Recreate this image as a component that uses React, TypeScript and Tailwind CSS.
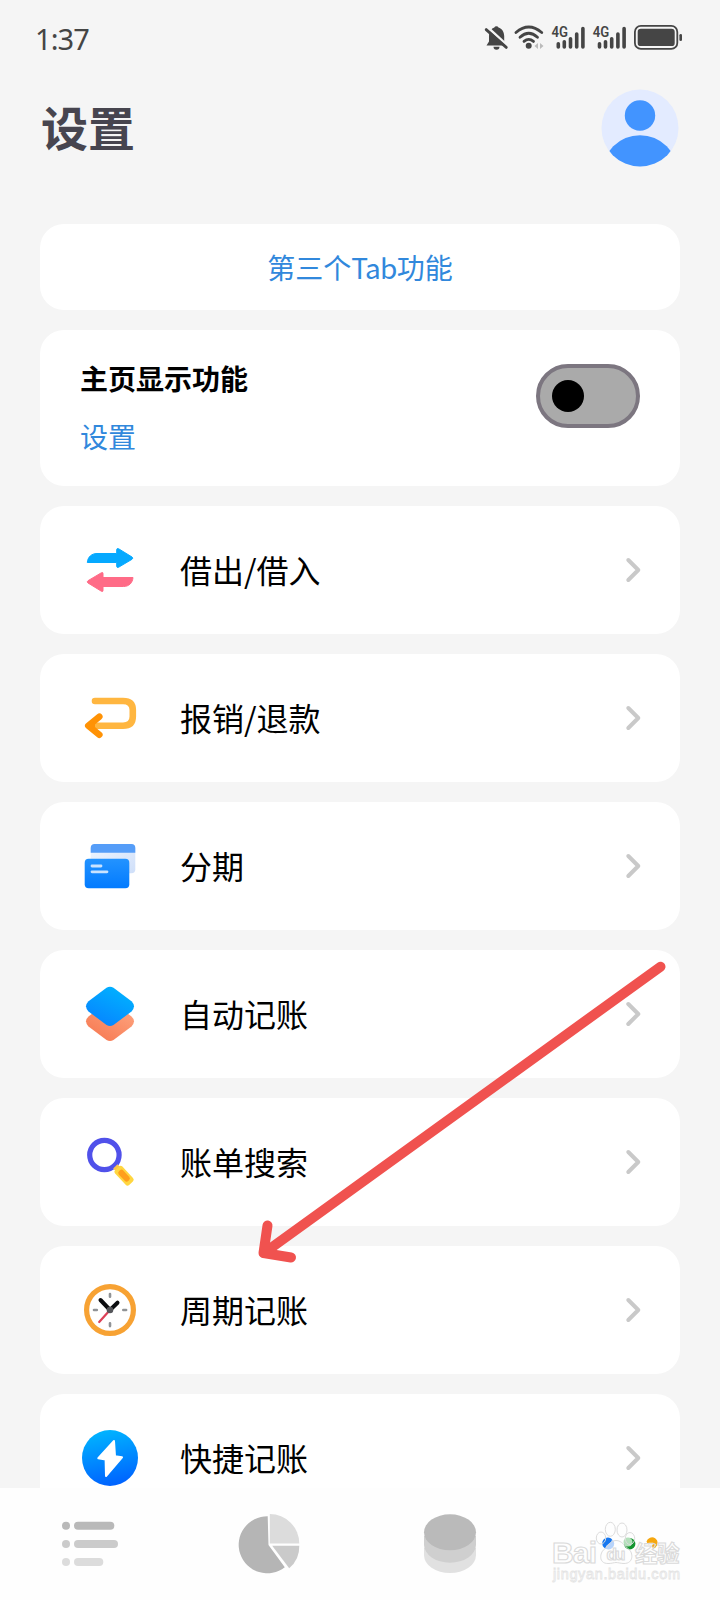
import type { ReactNode } from "react";

const ink = "#454545";

function StatusIcons() {
  return (
    <svg width="200" height="30" viewBox="0 0 200 30" fill="none">
      <g fill={ink}>
        <path d="M4.500 22.500 7 18.500V13.500C7 8.500 9.500 5.500 12.300 4.600a2.300 2.300 0 0 1 4.200 0C20 5.500 22 9 22.200 13v5.500l2.500 4Z" />
        <path d="M11.500 23.800h6a3 3 0 0 1-6 0Z" />
      </g>
      <path d="M5.500 4.300 27 24" stroke="#f5f5f5" strokeWidth="2.600" />
      <path d="M4.200 6.600 24.300 24.400" stroke={ink} strokeWidth="2.800" strokeLinecap="round" />
      <g stroke={ink} strokeWidth="2.800" strokeLinecap="round">
        <path d="M34 9.500Q46.700-1.500 59.700 9.500" />
        <path d="M38 14.300Q46.700 6.300 55.500 14.300" />
        <path d="M42 18.400Q46.700 14.300 51.500 18.400" />
      </g>
      <circle cx="46.700" cy="22.800" r="3" fill={ink} />
      <path d="m56 20-3.500 3 3.500 3Zm2 0 3.500 3-3.500 3Z" fill="#bbb" />
      {[0, 41.2].map((dx) => (
        <g key={dx} transform={`translate(${dx} 0)`}>
          <text x="69.500" y="14" fontSize="14.500" fontWeight="600" fill={ink} textLength="16.500" lengthAdjust="spacingAndGlyphs" className="font-['Roboto',sans-serif]">4G</text>
          <g stroke={ink} strokeWidth="3.600" strokeLinecap="round">
            <path d="M76.300 20.800V24M82.300 18.800V24M88.500 15.800V24M94.700 11V24M100.900 5.600V24" />
          </g>
        </g>
      ))}
      <rect x="152.900" y="2.900" width="42.400" height="23" rx="6" stroke={ink} strokeWidth="1.800" />
      <rect x="155.700" y="5.700" width="37" height="17.400" rx="3.200" fill={ink} />
      <rect x="197.400" y="11" width="2.600" height="7" rx="1.300" fill={ink} />
    </svg>
  );
}

function Avatar() {
  return (
    <svg width="78" height="78" viewBox="0 0 78 78">
      <defs>
        <clipPath id="avatar"><circle cx="39" cy="39" r="38.500" /></clipPath>
      </defs>
      <circle cx="39" cy="39" r="38.500" fill="#e3ebff" />
      <g clipPath="url(#avatar)" fill="#4294ff">
        <circle cx="39" cy="26.500" r="15.200" />
        <circle cx="39" cy="84" r="37.800" />
      </g>
    </svg>
  );
}

function Icon({ children }: { children: ReactNode }) {
  return (
    <svg width="60" height="60" viewBox="0 0 60 60" fill="none" className="shrink-0">
      {children}
    </svg>
  );
}

const LendIcon = (
  <Icon>
    <path d="M7.300 22.500C7.800 17 11.500 13.500 17 13.500H36.700V9.500Q37 8 38.500 8.700L52 17Q53.500 18.200 52 19.300L38.500 27.300Q37 28 36.700 26.500V22.500Z" fill="#05a9ff" stroke="#05a9ff" strokeWidth="1" strokeLinejoin="round" />
    <path d="M53 37.500C52.500 43 49 46.500 43.500 46.500H23V50.500Q23 52 21.500 51.300L8 43Q6.500 41.800 8 40.700L21.500 32.700Q23 32 23 33.500V37.500Z" fill="#ff6b87" stroke="#ff6b87" strokeWidth="1" strokeLinejoin="round" />
  </Icon>
);

const RefundIcon = (
  <Icon>
    <path d="M15 13H43Q52.800 13 52.800 22V28.500Q52.800 37.700 43 37.700H12" stroke="#ffb640" strokeWidth="6.600" strokeLinecap="round" />
    <path d="M19.300 28.700 8.300 37.700 19.300 46.700" stroke="#ff9205" strokeWidth="6.600" strokeLinecap="round" strokeLinejoin="round" />
    <path d="M15 33v9.500L8.300 37.700Z" fill="#ff9205" />
  </Icon>
);

const CardsIcon = (
  <Icon>
    <defs>
      <linearGradient id="cardFront" x1="0" y1="0" x2="0" y2="1">
        <stop stopColor="#2393ff" /><stop offset="1" stopColor="#027bff" />
      </linearGradient>
      <linearGradient id="cardBack" x1="0" y1="0" x2="1" y2="1">
        <stop stopColor="#f0f6ff" /><stop offset="1" stopColor="#cfdff9" />
      </linearGradient>
    </defs>
    <rect x="10.700" y="8" width="44.600" height="29.300" rx="4" fill="url(#cardBack)" />
    <path d="M10.700 16.800V12a4 4 0 0 1 4-4h36.600a4 4 0 0 1 4 4v4.800Z" fill="#559df8" />
    <rect x="4.700" y="22.700" width="44.600" height="29.600" rx="4" fill="url(#cardFront)" />
    <path d="M12 30h9M12 35.800h15" stroke="#c9e3ff" strokeWidth="2.800" strokeLinecap="round" />
  </Icon>
);

const LayersIcon = (
  <Icon>
    <defs>
      <linearGradient id="layerTop" x1="0.800" y1="0" x2="0.200" y2="1">
        <stop stopColor="#00b4ff" /><stop offset="1" stopColor="#0782ff" />
      </linearGradient>
      <linearGradient id="layerLow" x1="1" y1="0" x2="0.300" y2="1">
        <stop stopColor="#ffab86" /><stop offset="1" stopColor="#f77b54" />
      </linearGradient>
    </defs>
    <path d="M26.500 18.800Q30 16.600 33.500 18.800L51.500 32.500Q56.500 37 51.500 42.500L33.500 56Q30 58.200 26.500 56L8.500 42.500Q3.500 37 8.500 32.500Z" fill="url(#layerLow)" />
    <path d="M26.500 3.800Q30 1.600 33.500 3.800L51.500 17.200Q56.500 22.300 51.500 27.500L33.500 41Q30 43.200 26.500 41L8.500 27.500Q3.500 22.300 8.500 17.200Z" fill="url(#layerTop)" />
  </Icon>
);

const SearchIcon = (
  <Icon>
    <circle cx="24.400" cy="23" r="14.700" stroke="#5051ea" strokeWidth="5.200" />
    <g transform="translate(35 34) rotate(47)">
      <rect x="0.500" y="-3" width="8" height="6" fill="#fbc54c" />
      <rect x="3" y="-5" width="20.500" height="10" rx="2.500" fill="#ffd640" />
      <rect x="6.500" y="-3" width="13.500" height="6" rx="2.500" fill="#ff9f1c" />
    </g>
  </Icon>
);

const ClockIcon = (
  <Icon>
    <circle cx="30" cy="30" r="23.400" fill="#fff" stroke="#f7a233" strokeWidth="5.200" />
    <path d="M30 14v2.800M30 43.300v2.800M14 30h2.800M43.300 30h2.800" stroke="#909396" strokeWidth="2.600" strokeLinecap="round" />
    <path d="M20.500 20 30 30 37.500 22.700" stroke="#0c0d10" strokeWidth="4" strokeLinecap="round" strokeLinejoin="round" />
    <path d="M30 30 19.200 42" stroke="#dc4057" strokeWidth="2.200" strokeLinecap="round" />
    <circle cx="30" cy="30" r="3.300" fill="#55565a" />
  </Icon>
);

const BoltIcon = (
  <Icon>
    <defs>
      <linearGradient id="bolt" x1="0.400" y1="0" x2="0.600" y2="1">
        <stop stopColor="#00b4ff" /><stop offset="1" stopColor="#0061ff" />
      </linearGradient>
    </defs>
    <circle cx="30" cy="30" r="28" fill="url(#bolt)" />
    <path d="M34 13 18.300 30.200 25.600 31.500 26 48 42 29.300 35 28.200Z" fill="#fff" stroke="#fff" strokeWidth="2" strokeLinejoin="round" />
  </Icon>
);

const rows: { label: string; icon: ReactNode }[] = [
  { label: "借出/借入", icon: LendIcon },
  { label: "报销/退款", icon: RefundIcon },
  { label: "分期", icon: CardsIcon },
  { label: "自动记账", icon: LayersIcon },
  { label: "账单搜索", icon: SearchIcon },
  { label: "周期记账", icon: ClockIcon },
  { label: "快捷记账", icon: BoltIcon },
];

function Row({ label, icon }: { label: string; icon: ReactNode }) {
  return (
    <button className="flex h-32 shrink-0 items-center rounded-3xl bg-white pl-10 pr-9 text-left">
      {icon}
      <span className="ml-10 flex-1 pb-[3px] text-[32px] leading-none">{label}</span>
      <svg width="20" height="28" viewBox="0 0 20 28" fill="none">
        <path d="M4.300 4 14.300 14 4.300 24" stroke="#c9c9c9" strokeWidth="4" strokeLinecap="round" strokeLinejoin="round" />
      </svg>
    </button>
  );
}

function TabBar() {
  return (
    <nav className="grid h-28 shrink-0 grid-cols-4 place-items-center bg-[#fefefe]">
      <svg width="60" height="60" viewBox="0 0 60 60">
        <g fill="#b9b9b9"><circle cx="6" cy="11.700" r="4" /><rect x="14" y="7.700" width="40.300" height="8" rx="4" /></g>
        <g fill="#cbcbcb"><circle cx="6" cy="30" r="4" /><rect x="14" y="26" width="44" height="8" rx="4" /></g>
        <g fill="#dcdcdc"><circle cx="6" cy="48" r="4" /><rect x="14" y="44" width="29.300" height="8" rx="4" /></g>
      </svg>
      <svg width="60" height="60" viewBox="0 0 60 60" overflow="visible">
        <path d="M27.700 2.300A28.500 28.500 0 1 0 44.800 53.200L28.500 31Z" fill="#b5b5b5" />
        <path d="M29.800 0A29.500 29.500 0 0 1 59.300 29.500H29.800Z" fill="#dcdcdc" />
        <path d="M32.200 31.700H59.300A28.500 28.500 0 0 1 49.200 54.200Z" fill="#cacaca" />
      </svg>
      <svg width="60" height="60" viewBox="0 0 60 60">
        <path d="M4 34v7a26 18 0 0 0 52 0v-7Z" fill="#e1e1e1" />
        <path d="M4 22v8.700a26 18 0 0 0 52 0V22Z" fill="#cfcfcf" />
        <ellipse cx="30" cy="18.300" rx="26" ry="18" fill="#bababa" />
      </svg>
      <svg width="60" height="60" viewBox="0 0 60 60" fill="none">
        <circle cx="8.500" cy="29.700" r="5.700" fill="#b8d4fb" />
        <path d="M4 33.500A5.700 5.700 0 0 1 12 25.200Q12 28 9 29.500T5.500 34.500Z" fill="#1677f0" />
        <circle cx="29.700" cy="29.700" r="5.700" fill="#14952e" />
        <circle cx="28" cy="28" r="4.500" fill="#b4e0bb" />
        <path d="M46.500 27.500a5.700 5.700 0 1 1 9 6l-2.500 1.300-1-3 1-2-5 .500Z" fill="#f6a70f" />
        <path d="M48.500 29.500h4.500" stroke="#fff" strokeWidth="1.500" />
      </svg>
    </nav>
  );
}

function Watermark() {
  return (
    <svg width="140" height="68" viewBox="0 0 140 68" className="pointer-events-none absolute bottom-3 right-[32px] font-['Liberation_Sans','Noto_Sans_CJK_SC',sans-serif]">
      <g fill="none" stroke="#dcdcdc" strokeWidth="1">
        <ellipse cx="53" cy="18" rx="4.700" ry="6" />
        <ellipse cx="62.300" cy="9.300" rx="5" ry="7" />
        <ellipse cx="74" cy="10" rx="5" ry="7" />
        <ellipse cx="82" cy="18.500" rx="4.700" ry="6" />
        <path d="M68 20.500c-6 0-8 6-12 9s-6 14 4 14c4 0 6-1 8-1s5 1 8 1c10 0 9-11 5-14s-7-9-13-9Z" />
      </g>
      <g fill="#fff" fillOpacity="0.600" stroke="#dadada" strokeWidth="1.100" fontWeight="700">
        <text x="4" y="43" fontSize="30" textLength="45">Bai</text>
        <text x="58.500" y="40" fontSize="17" textLength="19">du</text>
        <text x="87" y="41.500" fontSize="22.500" textLength="44.500" fillOpacity="0">经验</text>
      </g>
      <text x="5" y="59" fontSize="14.500" textLength="127" fill="#fff" stroke="#e4e4e4" strokeWidth="0.800">jingyan.baidu.com</text>
    </svg>
  );
}

export default function App() {
  return (
    <div className="relative flex h-[1600px] w-[720px] flex-col overflow-hidden bg-[#f5f5f5] font-['Noto_Sans_CJK_SC',sans-serif] text-black">
      <header className="flex h-[76px] shrink-0 items-center justify-between pl-[35px] pr-[38px]">
        <span className="pt-px font-['Noto_Sans',sans-serif] text-[29px] leading-none tracking-[-0.9px] text-[#454545]">1:37</span>
        <StatusIcons />
      </header>
      <div className="flex h-[148px] shrink-0 items-start justify-between pl-10 pr-[41px] pt-[13px]">
        <h1 className="ml-px pt-[13px] text-[47px] font-bold leading-none text-[#47454f]">设置</h1>
        <Avatar />
      </div>
      <main className="flex min-h-0 flex-1 flex-col gap-5 overflow-hidden px-10">
        <button className="h-[86px] shrink-0 rounded-3xl bg-white text-[28px] leading-none text-[#3188dc]">
          第三个<span className="tracking-[-0.7px]">Tab</span>功能
        </button>
        <section className="flex h-[156px] shrink-0 items-start justify-between rounded-3xl bg-white pl-10 pr-10 pt-[34px]">
          <div className="flex flex-col items-start gap-[30px]">
            <h2 className="text-[28px] font-bold leading-none">主页显示功能</h2>
            <button className="text-[28px] leading-none text-[#3188dc]">设置</button>
          </div>
          <div className="flex h-16 w-[104px] items-center rounded-full border-4 border-[#7c7680] bg-[#aaaaaa] pl-3">
            <span className="size-8 rounded-full bg-black" />
          </div>
        </section>
        {rows.map((r) => (
          <Row key={r.label} label={r.label} icon={r.icon} />
        ))}
      </main>
      <TabBar />
      <svg width="420" height="310" viewBox="0 0 420 310" fill="none" className="pointer-events-none absolute left-[250px] top-[955px]">
        <g stroke="#f0524f" strokeWidth="10" strokeLinecap="round" strokeLinejoin="round">
          <path d="M410.500 11.700 14 298" />
          <path d="M17.500 270.500 13.500 298 41 302.500" />
        </g>
      </svg>
      <Watermark />
    </div>
  );
}
